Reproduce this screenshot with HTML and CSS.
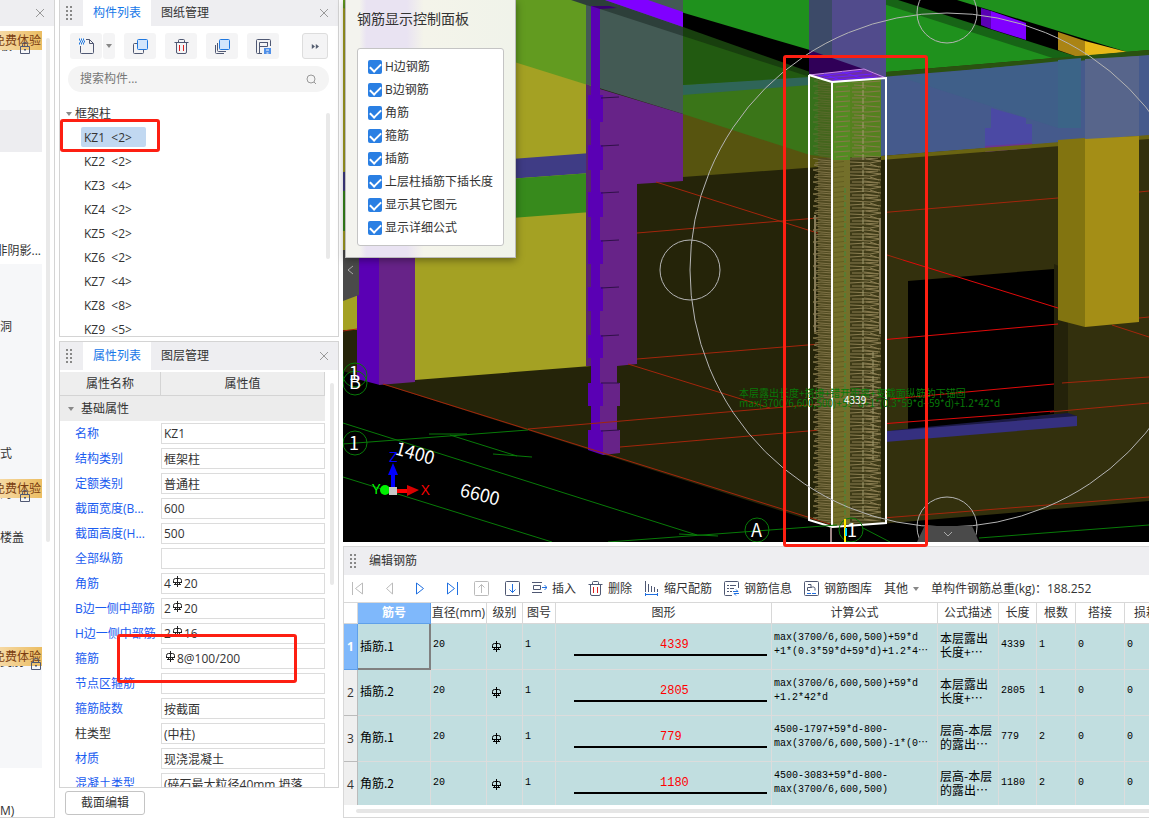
FILE: index.html
```
<!DOCTYPE html>
<html lang="zh-CN">
<head>
    <meta charset="UTF-8">
    <meta name="viewport" content="width=device-width, initial-scale=1.0">
    <title>编辑钢筋</title>
    <link rel="stylesheet" href="styles.css">
</head>
<body>
    <!-- 公用图标 -->
    <svg class="defs" aria-hidden="true">
        <symbol id="rebar" viewBox="0 0 11 11">
            <path d="M5.500 0v11M1 6.500h9M2 8.500h7M3.500 6v3M7.500 6v3" />
            <path d="M1.500 6.500V4.500q0-2 2-2h4q2 0 2 2v2" />
        </symbol>
        <symbol id="close" viewBox="0 0 10 10"><path d="M1 1l8 8M9 1l-8 8" /></symbol>
        <symbol id="lock" viewBox="0 0 10 12">
            <path d="M.5 4.500h9v7h-9zM2.500 4v-1.500a2.500 2 0 0 1 5 0V4M5 7v2M4 7.500h2" />
        </symbol>
        <symbol id="grip" viewBox="0 0 6 14">
            <path d="M0 0h2v2H0zM4 0h2v2H4zM0 4h2v2H0zM4 4h2v2H4zM0 8h2v2H0zM4 8h2v2H4zM0 12h2v2H0zM4 12h2v2H4z" />
        </symbol>
        <symbol id="bin" viewBox="0 0 15 15">
            <path d="M.5 3.500h14M2.500 3.500v9.500a1.500 1.500 0 0 0 1.500 1.500h7a1.500 1.500 0 0 0 1.500-1.500V3.500M4.500 3V1.500a1 1 0 0 1 1-1h4a1 1 0 0 1 1 1V3" />
            <path class="red" d="M5.500 6v6M9.500 6v6" />
        </symbol>
    </svg>

    <!-- 左侧导航 -->
    <aside class="nav">
        <header class="bar nav-bar">
            <button class="close" aria-label="关闭导航"><svg><use href="#close" /></svg></button>
        </header>
        <div class="nav-body">
            <div class="nav-list">
                <div class="nav-item tall"><span class="badge">免费体验</span><span class="under">板</span><svg class="lock"><use href="#lock" /></svg></div>
                <div class="nav-item active"></div>
                <div class="nav-item plain"><span>非阴影...</span></div>
                <div class="nav-item mid">洞</div>
                <div class="nav-item mid">式</div>
                <div class="nav-item sell"><span class="badge">免费体验</span><span class="under">沟</span><svg class="lock"><use href="#lock" /></svg></div>
                <div class="nav-item cap">楼盖</div>
                <div class="nav-item sell second"><span class="badge">免费体验</span><span class="under">类别</span><svg class="lock"><use href="#lock" /></svg></div>
                <div class="nav-item last">M)</div>
            </div>
            <div class="scroll"></div>
        </div>
    </aside>

    <!-- 构件与属性 -->
    <div class="side">
        <section class="panel parts">
            <header class="bar">
                <svg class="grip"><use href="#grip" /></svg>
                <button class="tab on">构件列表</button>
                <button class="tab">图纸管理</button>
                <button class="close" aria-label="关闭构件列表"><svg><use href="#close" /></svg></button>
            </header>
            <div class="tools">
                <button class="tool" aria-label="新建">
                    <svg viewBox="0 0 17 17"><path d="M8 1.500h3.500l4 4v9a1 1 0 0 1-1 1h-11a1 1 0 0 1-1-1V8M11.500 1.500v4h4" /><path class="dots" d="M1 1.500h5M2 3.500h5M1 5.500h5" /></svg>
                </button>
                <button class="tool drop" aria-label="新建选项"><i class="caret"></i></button>
                <button class="tool" aria-label="复制">
                    <svg viewBox="0 0 17 17"><rect x="1.500" y="5.500" width="10" height="10" rx="1" /><rect class="fill" x="5.500" y="1.500" width="10" height="10" rx="1" /></svg>
                </button>
                <button class="tool" aria-label="删除"><svg><use href="#bin" /></svg></button>
                <button class="tool" aria-label="层间复制">
                    <svg viewBox="0 0 17 17"><path d="M3.500 5v7.500a1 1 0 0 0 1 1H12M1.500 7v7.500a1 1 0 0 0 1 1H10" /><rect class="fill" x="5.500" y="1.500" width="10" height="10" rx="1" /></svg>
                </button>
                <button class="tool" aria-label="存档">
                    <svg viewBox="0 0 17 17"><path d="M7 15.500H2.500a1 1 0 0 1-1-1v-12a1 1 0 0 1 1-1h12a1 1 0 0 1 1 1V8M4.500 15V4.500h8M4.500 8.500h8V4" /><rect class="save" x="9" y="10" width="7" height="6" /><path class="white" d="M11 12h3M11.500 15h2" /></svg>
                </button>
                <button class="tool more" aria-label="更多"><svg viewBox="0 0 10 6"><path d="M1 0l4 3-4 3zM6 0l4 3-4 3z" /></svg></button>
            </div>
            <div class="search">
                <input type="text" placeholder="搜索构件..." aria-label="搜索构件">
                <svg viewBox="0 0 11 11"><circle cx="5" cy="5" r="4" /><path d="M8 8l2 2" /></svg>
            </div>
            <div class="tree">
                <div class="tree-head"><i class="caret"></i>框架柱</div>
                <ul>
                    <li class="picked">KZ1 &nbsp;&lt;2&gt;</li>
                    <li>KZ2 &nbsp;&lt;2&gt;</li>
                    <li>KZ3 &nbsp;&lt;4&gt;</li>
                    <li>KZ4 &nbsp;&lt;2&gt;</li>
                    <li>KZ5 &nbsp;&lt;2&gt;</li>
                    <li>KZ6 &nbsp;&lt;2&gt;</li>
                    <li>KZ7 &nbsp;&lt;4&gt;</li>
                    <li>KZ8 &nbsp;&lt;8&gt;</li>
                    <li>KZ9 &nbsp;&lt;5&gt;</li>
                </ul>
                <div class="scroll"></div>
            </div>
            <div class="mark mark-part"></div>
        </section>

        <section class="panel props">
            <header class="bar">
                <svg class="grip"><use href="#grip" /></svg>
                <button class="tab on">属性列表</button>
                <button class="tab">图层管理</button>
                <button class="close" aria-label="关闭属性列表"><svg><use href="#close" /></svg></button>
            </header>
            <div class="props-body">
                <div class="props-list">
                    <div class="props-head"><span>属性名称</span><span>属性值</span></div>
                    <div class="group"><i class="caret"></i>基础属性</div>
                    <div class="prop"><label for="p1">名称</label><input id="p1" type="text" value="KZ1"></div>
                    <div class="prop"><label for="p2">结构类别</label><input id="p2" type="text" value="框架柱"></div>
                    <div class="prop"><label for="p3">定额类别</label><input id="p3" type="text" value="普通柱"></div>
                    <div class="prop"><label for="p4">截面宽度(B...</label><input id="p4" type="text" value="600"></div>
                    <div class="prop"><label for="p5">截面高度(H...</label><input id="p5" type="text" value="500"></div>
                    <div class="prop"><label for="p6">全部纵筋</label><input id="p6" type="text" value=""></div>
                    <div class="prop"><label for="p7">角筋</label><div class="field">4<svg class="rebar"><use href="#rebar" /></svg><input id="p7" type="text" value="20"></div></div>
                    <div class="prop"><label for="p8">B边一侧中部筋</label><div class="field">2<svg class="rebar"><use href="#rebar" /></svg><input id="p8" type="text" value="20"></div></div>
                    <div class="prop"><label for="p9">H边一侧中部筋</label><div class="field">2<svg class="rebar"><use href="#rebar" /></svg><input id="p9" type="text" value="16"></div></div>
                    <div class="prop"><label for="p10">箍筋</label><div class="field"><svg class="rebar"><use href="#rebar" /></svg><input id="p10" type="text" value="8@100/200"></div></div>
                    <div class="prop"><label for="p11">节点区箍筋</label><input id="p11" type="text" value=""></div>
                    <div class="prop"><label for="p12">箍筋肢数</label><input id="p12" type="text" value="按截面"></div>
                    <div class="prop dark"><label for="p13">柱类型</label><input id="p13" type="text" value="(中柱)"></div>
                    <div class="prop"><label for="p14">材质</label><input id="p14" type="text" value="现浇混凝土"></div>
                    <div class="prop"><label for="p15">混凝土类型</label><input id="p15" type="text" value="(碎石最大粒径40mm 坍落..."></div>
                </div>
                <div class="scroll"></div>
            </div>
            <div class="mark mark-prop"></div>
        </section>

        <footer class="side-foot"><button class="edit">截面编辑</button></footer>
    </div>

    <main class="work">
        <!-- 三维视图 -->
        <div class="view">
            <svg class="scene" viewBox="343 0 806 542" preserveAspectRatio="xMidYMid slice">
                <defs>
                    <pattern id="tiesLeft" x="812" y="80" width="20" height="12" patternUnits="userSpaceOnUse">
                        <path d="M20 1L8 0 2 1l6 2 12 1M20 6L9 5 1 6l8 2 11 1M20 11l-11-1-6 1" fill="none" stroke="#7d7145" />
                    </pattern>
                    <pattern id="tiesRight" x="850" y="80" width="32" height="13" patternUnits="userSpaceOnUse">
                        <path d="M0 1h14l14-1M0 4l20 1 11-2M0 8l16-1 15 2M2 11h12l14 1M16 1l15 2M20 6l9 3M14 10l16 2" fill="none" stroke="#897c50" />
                    </pattern>
                    <pattern id="tiesTop" x="832" y="80" width="50" height="10" patternUnits="userSpaceOnUse">
                        <path d="M2 2l16-1M20 2h16l12-1M22 5l26 2M4 7l12-1M20 8h14" fill="none" stroke="#86794a" />
                    </pattern>
                    <pattern id="tiesMid" x="832" y="80" width="18" height="5" patternUnits="userSpaceOnUse">
                        <path d="M2 2.500l10-1" fill="none" stroke="#625d1f" />
                    </pattern>
                </defs>
                <rect x="343" width="806" height="542" fill="#000" />
                <!-- 墙面 -->
                <path d="M343 0H835V528L385 385 343 371z" fill="#252409" />
                <path d="M832 0H1149V501L832 528z" fill="#33300d" />
                <path d="M343 0H591V366L415 380V329L343 330z" fill="#a4a123" />
                <path d="M343 0H591V86L343 8z" fill="#629b20" />
                <path d="M343 172L591 153V173L343 191z" fill="#3f3c85" />
                <path d="M343 191L591 173V212L343 231z" fill="#378a1c" />
                <!-- 左柱 -->
                <path d="M357 240H380V385L357 379z" fill="#5a00b4" />
                <path d="M379 240H415V382L379 385z" fill="#672388" />
                <!-- 上部构件 -->
                <path d="M683 0H832V166L683 177z" fill="#57540f" />
                <path d="M683 27H810V155L683 114z" fill="#3a7518" />
                <path d="M683 85L810 76V85L683 95z" fill="#2f6558" />
                <path d="M683 24L810 70V77L683 85z" fill="#225a11" />
                <path d="M683 27L810 67V77L683 36z" fill="#183f0e" />
                <path d="M683 10L810 48V72L683 27z" fill="#000" />
                <path d="M640 0H832V55L810 50z" fill="#1f911d" />
                <!-- 构造柱 -->
                <path d="M586 0H683V114L586 84z" fill="#435a54" />
                <path d="M586 84L600 89V366H586z" fill="#57256f" />
                <path d="M600 89L683 114V181L637 184V364L617 366V383H620V406H617V430H620V453L603 455 597 440z" fill="#672388" />
                <path d="M571 0H605L683 27V36L600 9 586 5z" fill="#2d3f3a" />
                <path d="M605 0H648L683 12V27z" fill="#8000ff" />
                <path d="M591 6H600V95H603V122H600V145H603V170H600V192H603V217H600V240H603V264H600V287H603V311H600V335H603V358H600V383H603V406H600V430H603V455L588 450V430H591V406H588V383H591V358H588V335H591V311H588V287H591V264H588V240H591V217H588V192H591V170H588V145H591V119H588V95H591z" fill="#5a00b4" />
                <path d="M591 6H610L617 8 600 9z" fill="#380070" />
                <path d="M601 98l18-1M601 146l18-1M601 193l18-1M601 241l18-1M601 288l18-1M601 336l18-1M601 383h18M601 431l18-1" stroke="#2f1048" fill="none" />
                <!-- 右侧楼板与梁 -->
                <path d="M886 0H1149V50L886 72z" fill="#1f911d" />
                <path d="M871 0H900L1081 56V59L1062 61z" fill="#176416" />
                <path d="M898 0H957L1127 52 1075 56z" fill="#000" />
                <path d="M981 8L991 11V29L981 25z" fill="#5a00b4" />
                <path d="M991 11L1026 23V40L991 29z" fill="#8000ff" />
                <path d="M1058 32L1085 41V56H1075L1058 50z" fill="#aa8414" />
                <path d="M1085 41L1127 52 1085 56z" fill="#e8b918" />
                <path d="M886 72L1149 50V56L886 77z" fill="#2a5211" />
                <path d="M881 77L1149 55V136L881 156z" fill="#455a8c" />
                <path d="M900 77L1081 59V128H1058z" fill="#3f5f89" />
                <path d="M1058 60L1081 58V128H1058z" fill="#3b6487" />
                <path d="M1085 59L1139 56V136L1085 140z" fill="#57658b" />
                <path d="M991 108L1026 118V124H1032V148L985 151V128H991z" fill="#4b49a4" />
                <path d="M985 146L1032 143V148L985 152z" fill="#6e3590" />
                <path d="M881 156L1149 135V139L881 160z" fill="#6a6412" />
                <!-- 门洞 -->
                <path d="M1054 264L1068 270V416L1054 414z" fill="#24220a" />
                <path d="M908 281L1054 269V414L908 430z" fill="#000" />
                <path d="M895 430L1068 413 1077 416 885 432z" fill="#1b1944" />
                <path d="M876 432L1077 416V426L885 442z" fill="#35307f" />
                <!-- 轴网投影 -->
                <g stroke="#a3260c" fill="none">
                    <path d="M343 331l14-2M383 384L830 524M656 182L903 260M637 233L1058 198M1139 192l10-1M637 359L820 344M628 364L770 408M528 429L820 404M620 447L820 430M870 519L1149 497M1112 325L1149 337M1139 318l10-1M1062 383l87-6M1050 412l99-9" />
                    <path d="M903 260L1058 308M880 340L1058 324M890 399L1054 384M880 424L1054 411" stroke="#e00a0a" />
                </g>
                <path d="M1058 140L1085 138V327L1058 320z" fill="#827410" />
                <path d="M1085 139L1139 136V322L1085 327z" fill="#a48e16" />
                <!-- 选中柱 -->
                <path d="M809 0H832V78L809 75z" fill="#3c4a68" />
                <path d="M832 0H886V78H832z" fill="#514b8c" />
                <path d="M809 50L875 73 832 80 809 75z" fill="#300058" />
                <path d="M810 77L832 82V157L810 155z" fill="#36701b" />
                <path d="M832 82L881 79V157L832 158z" fill="#55811f" />
                <path d="M818 80L832 82V158L818 156z" fill="#43651c" />
                <path d="M832 82H850V160H832z" fill="#528c21" />
                <path d="M881 160H886V520L881 521z" fill="#252409" />
                <path d="M818 158H832V524L818 520z" fill="#504a20" />
                <path d="M832 160H850V524L832 526z" fill="#736f2a" />
                <path d="M850 160H881V522L850 524z" fill="#403c18" />
                <path d="M812 158H832V524L812 518z" fill="url(#tiesLeft)" />
                <path d="M812 80H832V158L812 156z" fill="url(#tiesLeft)" opacity=".35" />
                <path d="M850 158H882V520L850 524z" fill="url(#tiesRight)" />
                <path d="M832 84L882 80V158H832z" fill="url(#tiesTop)" />
                <path d="M832 160H850V524L832 526z" fill="url(#tiesMid)" />
                <path d="M815 215V332M880 218V334" stroke="#857a58" stroke-width="2" fill="none" />
                <path d="M863 82V518M873 352V460" stroke="#a39d70" stroke-dasharray="6 2" fill="none" />
                <path d="M845 188V518" stroke="#3f8a3c" stroke-dasharray="5 2" fill="none" />
                <path d="M809 75L864 69 886 78 832 82z" fill="#6d2fa6" stroke="#c98be8" />
                <path d="M818 76l44-5M824 78l48-4M832 80l45-3M824 74l16 6M842 72l22 7" stroke="#6a20ff" fill="none" />
                <path d="M809 75V520L832 527 886 523V78L832 82V527M809 75L832 82" stroke="#fff" stroke-width="2" fill="none" />
                <!-- 轴线 -->
                <g stroke="#087a08" fill="none">
                    <path d="M343 444L528 430M343 423L697 535M343 477L552 542M429 434h38M450 435L517 456M493 454l39 3M679 534l39 2M608 542L837 525M863 528L890 542M979 538L1149 525" />
                    <circle cx="355" cy="375" r="12" /><circle cx="355" cy="383" r="12" /><circle cx="355" cy="443" r="12" />
                    <circle cx="757" cy="530" r="12" /><circle cx="851" cy="530" r="12" />
                </g>
                <path d="M845 519V542" stroke="#ffe800" stroke-width="2" fill="none" />
                <path d="M846 528v8" stroke="#00d8ff" stroke-width="2" />
                <path d="M831 528V542" stroke="#a08888" stroke-width="2" />
                <!-- 视图旋转盘 -->
                <g stroke="#b4b4b4" fill="none">
                    <circle cx="947" cy="270" r="257" /><circle cx="947" cy="13" r="30" />
                    <circle cx="690" cy="270" r="30" /><circle cx="947" cy="527" r="30" />
                </g>
                <g class="axis-text">
                    <text x="349" y="380">1</text><text x="349" y="389">B</text><text x="349" y="450">1</text>
                    <text x="751" y="537">A</text><text x="847" y="537">1</text>
                    <text class="dim" transform="translate(394 454) rotate(16)">1400</text>
                    <text class="dim" transform="translate(459 496) rotate(14)">6600</text>
                </g>
                <!-- 坐标轴 -->
                <path d="M393 490V474" stroke="#00f" stroke-width="4" />
                <path d="M393 463l5 12h-10z" fill="#00f" />
                <path d="M397 491h12" stroke="#f00" stroke-width="4" />
                <path d="M407 485l12 5-12 6z" fill="#d80000" />
                <circle cx="385" cy="490" r="5" fill="#00f000" />
                <path d="M389 487h8v8h-8z" fill="#c8c8c8" />
                <g class="xyz">
                    <text x="389" y="462" fill="#00f">Z</text><text x="372" y="494" fill="#0f0">Y</text><text x="421" y="495" fill="#f00">X</text>
                </g>
                <g class="note">
                    <text x="739" y="397">本层露出长度+搭接+错开距离+变截面纵筋的下锚固</text>
                    <text x="739" y="407">max(3700/6,600,500)+59*d+1*(0.3*59*d+59*d)+1.2*42*d</text>
                    <text class="len" x="844" y="404">4339</text>
                </g>
                <path d="M343 250H359V295L343 301z" fill="#4a4a4a" />
                <path d="M917 542L924 527Q925 526 927 526H970Q972 526 973 528L979 542z" fill="#4a4a4a" />
                <path d="M353 266l-5 4 5 4M944 532l4 4 4-4" stroke="#aaa" fill="none" />
            </svg>

            <form class="control">
                <h2>钢筋显示控制面板</h2>
                <div class="checks">
                    <label><input type="checkbox" checked>H边钢筋</label>
                    <label><input type="checkbox" checked>B边钢筋</label>
                    <label><input type="checkbox" checked>角筋</label>
                    <label><input type="checkbox" checked>箍筋</label>
                    <label><input type="checkbox" checked>插筋</label>
                    <label><input type="checkbox" checked>上层柱插筋下插长度</label>
                    <label><input type="checkbox" checked>显示其它图元</label>
                    <label><input type="checkbox" checked>显示详细公式</label>
                </div>
            </form>
            <div class="mark mark-column"></div>
        </div>

        <!-- 编辑钢筋 -->
        <section class="rebars">
            <header class="bar">
                <svg class="grip"><use href="#grip" /></svg>
                <h2>编辑钢筋</h2>
            </header>
            <div class="actions">
                <div class="steps">
                    <button class="off" aria-label="首行"><svg viewBox="0 0 15 15"><path d="M2.500 1v13M12.500 2v11L5.500 7.500z" /></svg></button>
                    <button class="off" aria-label="上一行"><svg viewBox="0 0 15 15"><path d="M11.500 2v11L5.500 7.500z" /></svg></button>
                    <button class="blue" aria-label="下一行"><svg viewBox="0 0 15 15"><path d="M4.500 2v11L11.500 7.500z" /></svg></button>
                    <button class="blue" aria-label="末行"><svg viewBox="0 0 15 15"><path d="M14.500 1v13M4.500 2v11L11.500 7.500z" /></svg></button>
                    <button class="off" aria-label="上移"><svg viewBox="0 0 15 15"><rect x=".5" y=".5" width="14" height="14" rx="1" /><path d="M7.500 12V3.500M4.500 6.500l3-3 3 3" /></svg></button>
                    <button aria-label="下移"><svg viewBox="0 0 15 15"><rect x=".5" y=".5" width="14" height="14" rx="1" /><path class="b" d="M7.500 3v8.500M4.500 8.500l3 3 3-3" /></svg></button>
                </div>
                <button><svg viewBox="0 0 15 15"><path d="M0 1.500h10M0 11.500h10M1.500 4.500h7v4h-7z" /><path class="b" d="M10 6.500h5M12.500 4l2.500 2.500L12.500 9" /></svg>插入</button>
                <button><svg><use href="#bin" /></svg>删除</button>
                <button><svg viewBox="0 0 15 15"><path d="M1.500 0v11M4.500 3v8M7.500 5v6M10.500 6v5M13.500 8v3" /><path class="b" d="M1.500 13.500h12M1.500 12v3M13.500 12v3" /></svg>缩尺配筋</button>
                <button><svg viewBox="0 0 15 15"><path d="M8 14.500H1.500a1 1 0 0 1-1-1v-12a1 1 0 0 1 1-1h12a1 1 0 0 1 1 1V7M3 4.500h2M6 4.500h6M3 7.500h2M6 7.500h4M3 10.500h2M6 10.500h2" /><path class="b" d="M9 10.500h5l-2-2M15 12.500h-5l2 2" /></svg>钢筋信息</button>
                <button><svg viewBox="0 0 15 15"><rect x=".5" y=".5" width="14" height="14" rx="1" /><path d="M4 3.500h3v3H3.500v3H6M7 6.500c2-1 4-.5 4 1v2" /><path class="b" d="M3 12.500h4M8 12.500h4" /></svg>钢筋图库</button>
                <button class="other">其他<i class="caret"></i></button>
                <span class="total">单构件钢筋总重(kg)：188.252</span>
            </div>
            <div class="grid">
                <table>
                    <colgroup>
                        <col class="c-no"><col class="c-name"><col class="c-dia"><col class="c-grade"><col class="c-fig"><col class="c-shape"><col class="c-calc"><col class="c-desc"><col class="c-len"><col class="c-num"><col class="c-lap"><col class="c-loss">
                    </colgroup>
                    <thead>
                        <tr><th></th><th class="sel">筋号</th><th>直径(mm)</th><th>级别</th><th>图号</th><th>图形</th><th>计算公式</th><th>公式描述</th><th>长度</th><th>根数</th><th>搭接</th><th>损耗</th></tr>
                    </thead>
                    <tbody>
                        <tr>
                            <th class="sel">1</th><td class="name cur">插筋.1</td><td>20</td><td><svg class="rebar"><use href="#rebar" /></svg></td><td>1</td>
                            <td class="shape"><span>4339</span></td><td>max(3700/6,600,500)+59*d<br>+1*(0.3*59*d+59*d)+1.2*4⋯</td><td class="desc">本层露出<br>长度+⋯</td><td>4339</td><td>1</td><td>0</td><td>0</td>
                        </tr>
                        <tr>
                            <th>2</th><td class="name">插筋.2</td><td>20</td><td><svg class="rebar"><use href="#rebar" /></svg></td><td>1</td>
                            <td class="shape"><span>2805</span></td><td>max(3700/6,600,500)+59*d<br>+1.2*42*d</td><td class="desc">本层露出<br>长度+⋯</td><td>2805</td><td>1</td><td>0</td><td>0</td>
                        </tr>
                        <tr>
                            <th>3</th><td class="name">角筋.1</td><td>20</td><td><svg class="rebar"><use href="#rebar" /></svg></td><td>1</td>
                            <td class="shape"><span>779</span></td><td>4500-1797+59*d-800-<br>max(3700/6,600,500)-1*(0⋯</td><td class="desc">层高-本层<br>的露出⋯</td><td>779</td><td>2</td><td>0</td><td>0</td>
                        </tr>
                        <tr>
                            <th>4</th><td class="name">角筋.2</td><td>20</td><td><svg class="rebar"><use href="#rebar" /></svg></td><td>1</td>
                            <td class="shape"><span>1180</span></td><td>4500-3083+59*d-800-<br>max(3700/6,600,500)</td><td class="desc">层高-本层<br>的露出⋯</td><td>1180</td><td>2</td><td>0</td><td>0</td>
                        </tr>
                    </tbody>
                </table>
            </div>
            <div class="scroll-x"></div>
        </section>
    </main>
</body>
</html>
```
FILE: styles.css
```
/* Allgemein */
* {
    box-sizing: border-box;
}

body {
    margin: 0;
    height: 100vh;
    display: flex;
    overflow: hidden;
    background: #fff;
    color: #333;
    font-family: "Open Sans", "Noto Sans CJK SC", sans-serif;
    font-size: 12px;
    line-height: 16px;
}

button, input {
    font: inherit;
    color: inherit;
    margin: 0;
}

button {
    border: 0;
    padding: 0;
    background: none;
    white-space: nowrap;
}

h2 {
    margin: 0;
    font-weight: normal;
}

svg {
    fill: none;
    stroke: #4f5873;
}

.defs {
    position: absolute;
    width: 0;
    height: 0;
}

.bar {
    display: flex;
    align-items: center;
    flex: none;
    height: 28px;
    background: #eeeef1;
}

.grip {
    width: 6px;
    height: 14px;
    margin: 0 11px 0 6px;
    fill: #888;
    stroke: none;
}

.close {
    display: flex;
    margin-left: auto;
    padding-right: 9px;
}

.close svg {
    width: 10px;
    height: 10px;
    stroke: #999;
}

.tab {
    height: 100%;
    width: 68px;
}

.tab.on {
    background: #fff;
    color: #1677e8;
}

.caret {
    display: inline-block;
    border: 3px solid transparent;
    border-top: 4px solid #888;
    border-bottom: 0;
}

.scroll {
    width: 4px;
    border-radius: 2px;
    background: #e9e9e9;
}

.rebar {
    width: 11px;
    height: 11px;
    stroke: #222;
}

/* rote Markierungen */
.mark {
    position: absolute;
    border: 3px solid #fd1f12;
    border-radius: 3px;
    pointer-events: none;
    z-index: 5;
}

.mark-part {
    left: 0;
    top: 119px;
    width: 100px;
    height: 33px;
}

.mark-prop {
    left: 57px;
    top: 292px;
    width: 180px;
    height: 49px;
}

.mark-column {
    left: 440px;
    top: 55px;
    width: 145px;
    height: 492px;
}

/* Navigation links */
.nav {
    flex: none;
    width: 55px;
    margin-bottom: 2px;
    display: flex;
    flex-direction: column;
    border-right: 1px solid #d4d4d4;
    border-bottom: 1px solid #d4d4d4;
}

.nav-bar {
    height: 26px;
}

.nav-body {
    flex: 1;
    min-height: 0;
    display: flex;
    gap: 4px;
    overflow: hidden;
}

.nav-body .scroll {
    height: 504px;
    margin-top: 12px;
}

.nav-list {
    width: 42px;
    flex: none;
    padding-top: 5px;
    overflow: hidden;
}

.nav-item {
    position: relative;
    background: #f6f7f9;
    white-space: nowrap;
}

.tall {
    height: 79px;
}

.active {
    height: 42px;
    background: #ededf0;
}

.plain {
    display: flex;
    justify-content: flex-end;
    height: 112px;
    padding-top: 91px;
    padding-right: 1px;
    background: #fff;
}

.mid {
    height: 127px;
    padding-top: 55px;
}

.mid + .mid {
    height: 88px;
}

.sell {
    height: 51px;
}

.cap {
    height: 117px;
}

.second {
    height: 121px;
}

.last {
    padding-top: 35px;
    background: #fff;
}

.badge {
    display: flex;
    justify-content: flex-end;
    height: 19px;
    padding-right: 1px;
    line-height: 20px;
    background: linear-gradient(90deg, #f6d9a4, #ebbd62);
    color: #7a3d10;
    overflow: hidden;
}

.under {
    display: flex;
    align-items: flex-end;
    height: 4px;
    overflow: hidden;
}

.lock {
    position: absolute;
    left: 20px;
    top: 11px;
    width: 10px;
    height: 12px;
}

.second .lock {
    left: 31px;
}

/* mittlere Spalte */
.side {
    flex: none;
    width: 280px;
    margin: 0 4px;
    display: flex;
    flex-direction: column;
}

.panel {
    position: relative;
    display: flex;
    flex-direction: column;
    border: 1px solid #d4d4d4;
}

.parts {
    flex: none;
    height: 337px;
    border-top: 0;
    margin-bottom: 4px;
}

.parts .bar {
    height: 26px;
}

.tools {
    display: flex;
    padding: 7px 10px 0;
}

.tool {
    display: flex;
    align-items: center;
    justify-content: center;
    width: 32px;
    height: 26px;
    margin-right: 9px;
    border-radius: 3px;
    background: #f4f4f5;
}

.tool:first-child {
    margin-right: 1px;
}

.tool.drop {
    width: 12px;
}

.tool svg {
    width: 17px;
    height: 17px;
}

.tool:nth-child(4) svg {
    width: 15px;
    height: 15px;
}

.tool .fill {
    fill: #d3e6fc;
    stroke: #1f78e0;
}

.tool .dots {
    stroke: #1f78e0;
    stroke-width: 2;
    stroke-dasharray: 1 1;
}

.tool .save {
    fill: #4f8fe8;
    stroke: none;
}

.tool .white {
    stroke: #fff;
}

.red {
    stroke: #e02020;
}

.tool.more {
    width: 26px;
    margin: 0 0 0 auto;
    border: 1px solid #ddd;
}

.tool.more svg {
    width: 8px;
    height: 5px;
    fill: #555e70;
    stroke: none;
}

.search {
    display: flex;
    align-items: center;
    height: 26px;
    margin: 7px 9px 0 8px;
    padding: 0 12px;
    border-radius: 13px;
    background: #f4f4f4;
}

.search input {
    flex: 1;
    min-width: 0;
    border: 0;
    padding: 0;
    background: none;
    outline: 0;
}

.search input::placeholder {
    color: #777;
}

.search svg {
    width: 11px;
    height: 11px;
    stroke: #999;
}

.tree {
    position: relative;
    flex: 1;
    min-height: 0;
    padding-top: 10px;
    overflow: hidden;
}

.tree-head {
    display: flex;
    align-items: center;
    gap: 3px;
    height: 24px;
    padding-left: 6px;
}

.tree ul {
    list-style: none;
    margin: 0;
    padding: 0 0 0 21px;
}

.tree li {
    width: 65px;
    height: 20px;
    margin: 1px 0 4px;
    padding-left: 3px;
    line-height: 21px;
    border-radius: 2px;
}

.tree .picked {
    background: #c1d8f1;
}

.tree .scroll {
    position: absolute;
    right: 8px;
    top: 21px;
    height: 146px;
}

.props {
    flex: 1;
    min-height: 0;
}

.props-body {
    flex: 1;
    min-height: 0;
    display: flex;
    gap: 5px;
    padding-top: 2px;
    overflow: hidden;
}

.props-body .scroll {
    height: 202px;
    margin-top: 11px;
}

.props-list {
    width: 265px;
    flex: none;
}

.props-head {
    display: grid;
    grid-template-columns: 101px 1fr;
    height: 24px;
    line-height: 24px;
    text-align: center;
    background: #eee;
    border-bottom: 1px solid #d4d4d4;
    border-right: 1px solid #d4d4d4;
}

.props-head span:first-child {
    border-right: 1px solid #d4d4d4;
}

.group {
    display: flex;
    align-items: center;
    gap: 7px;
    height: 25px;
    padding-left: 8px;
    background: #ececec;
}

.prop {
    display: grid;
    grid-template-columns: 86px 164px;
    align-items: center;
    height: 25px;
    padding-left: 15px;
    color: #1a5cf0;
    white-space: nowrap;
}

.prop.dark {
    color: #333;
}

.prop > input, .field {
    width: 100%;
    height: 21px;
    padding: 0 2px;
    border: 1px solid #dcdcdc;
    background: #fff;
    color: #333;
}

.field {
    display: flex;
    align-items: center;
}

.field .rebar {
    flex: none;
    margin: 0 1px 4px;
}

.field input {
    flex: 1;
    min-width: 0;
    border: 0;
    padding: 0;
}

.side-foot {
    flex: none;
    height: 32px;
    padding: 3px 6px;
}

.edit {
    width: 80px;
    height: 24px;
    border: 1px solid #c4c4c4;
    border-radius: 3px;
    background: #fff;
}

/* Arbeitsbereich */
.work {
    flex: 1;
    min-width: 0;
    display: flex;
    flex-direction: column;
}

.view {
    position: relative;
    flex: 1;
    min-height: 0;
    margin-bottom: 4px;
}

.scene {
    display: block;
    width: 100%;
    height: 100%;
    stroke: none;
}

.axis-text {
    fill: #fff;
    font-family: "Noto Sans CJK SC", sans-serif;
    font-size: 18px;
}

.dim {
    font-size: 18px;
}

.xyz {
    font-size: 15px;
}

.note {
    fill: #087a08;
    font-family: "Noto Sans CJK SC", sans-serif;
    font-size: 10px;
}

.len {
    fill: #fff;
}

.control {
    position: absolute;
    left: 2px;
    top: 0;
    width: 171px;
    height: 258px;
    padding: 10px 11px;
    background: linear-gradient(90deg, #f3f3ee 8%, #e9e3f2 12%, #e9e3f2 36%, #f4f4ea 46%, #f0f3ea);
    border: 1px solid #bbb;
    border-top: 0;
    box-shadow: 0 2px 8px rgba(0, 0, 0, 0.4);
}

.control h2 {
    font-size: 14px;
    line-height: 18px;
    margin-bottom: 20px;
}

.control .checks {
    width: 147px;
    height: 198px;
    padding: 6px 10px;
    border: 1px solid #c4c4c4;
    border-radius: 3px;
    background: #fff;
}

.control label {
    display: flex;
    align-items: center;
    gap: 3px;
    height: 23px;
    white-space: nowrap;
}

.control input {
    appearance: none;
    width: 14px;
    height: 14px;
    border-radius: 2px;
    background: #2a7fe3;
}

.control input::before {
    content: "";
    display: block;
    width: 9px;
    height: 5px;
    margin: 3px 2px;
    border: solid #fff;
    border-width: 0 0 2px 2px;
    transform: rotate(-45deg);
}

/* Tabelle unten */
.rebars {
    flex: none;
    height: 272px;
    margin-bottom: 2px;
    display: flex;
    flex-direction: column;
    border: 1px solid #d8d8d8;
    border-right: 0;
}

.rebars h2 {
    font-size: 12px;
    padding-left: 2px;
}

.actions {
    display: flex;
    align-items: center;
    gap: 12px;
    height: 27px;
    padding-left: 6px;
}

.actions button {
    display: flex;
    align-items: center;
    gap: 5px;
    flex: none;
}

.actions svg {
    width: 15px;
    height: 15px;
}

.actions .b, .blue svg {
    stroke: #1f6fe0;
}

.off svg {
    stroke: #bbb;
}

.steps {
    display: flex;
    gap: 16px;
}

.total {
    white-space: nowrap;
}

.grid {
    flex: 1;
    min-height: 0;
    overflow: hidden;
    border-top: 1px solid #d8d8d8;
}

.grid table {
    width: 824px;
    table-layout: fixed;
    border-collapse: separate;
    border-spacing: 0;
}

.c-no { width: 14px; }
.c-name { width: 73px; }
.c-dia { width: 56px; }
.c-grade { width: 36px; }
.c-fig { width: 33px; }
.c-shape { width: 216px; }
.c-calc { width: 166px; }
.c-desc { width: 61px; }
.c-len { width: 38px; }
.c-num { width: 39px; }
.c-lap { width: 49px; }
.c-loss { width: 43px; }

.grid th {
    height: 21px;
    padding: 0;
    font-weight: normal;
    white-space: nowrap;
    border-right: 1px solid #d8d8d8;
    border-bottom: 1px solid #d8d8d8;
}

.grid tbody th {
    background: #efefef;
    border-color: #bbb;
}

.grid thead .sel, .grid tbody .sel {
    background: #7fb8fb;
    border-color: #5fa0ea;
    color: #fff;
    font-weight: bold;
}

.grid td {
    height: 46px;
    padding: 0 2px 3px;
    background: #c1dee0;
    border-right: 1px solid #dcdcdc;
    border-bottom: 1px solid #dcdcdc;
    color: #000;
    font-family: "Liberation Mono", "Noto Sans CJK SC", monospace;
    font-size: 10px;
    line-height: 14px;
    white-space: nowrap;
}

.grid td:nth-child(4) {
    padding: 0 2px 0 4px;
}

.grid td .rebar {
    display: block;
    stroke: #000;
}

.grid .name, .grid .desc {
    font-family: "Noto Sans CJK SC", sans-serif;
    font-size: 12px;
}

.grid .cur {
    padding-bottom: 0;
    border-right: 2px solid #808080;
    border-bottom: 2px solid #808080;
}

.grid .shape {
    padding: 0 4px 4px 18px;
    color: #f00;
    font-size: 12px;
}

.shape span {
    display: block;
    padding: 5px 0 2px 86px;
    border-bottom: 2px solid #000;
}

.scroll-x {
    flex: none;
    height: 4px;
    margin: 4px 0 4px 12px;
    border-radius: 2px 0 0 2px;
    background: #e6e6e6;
}
```
